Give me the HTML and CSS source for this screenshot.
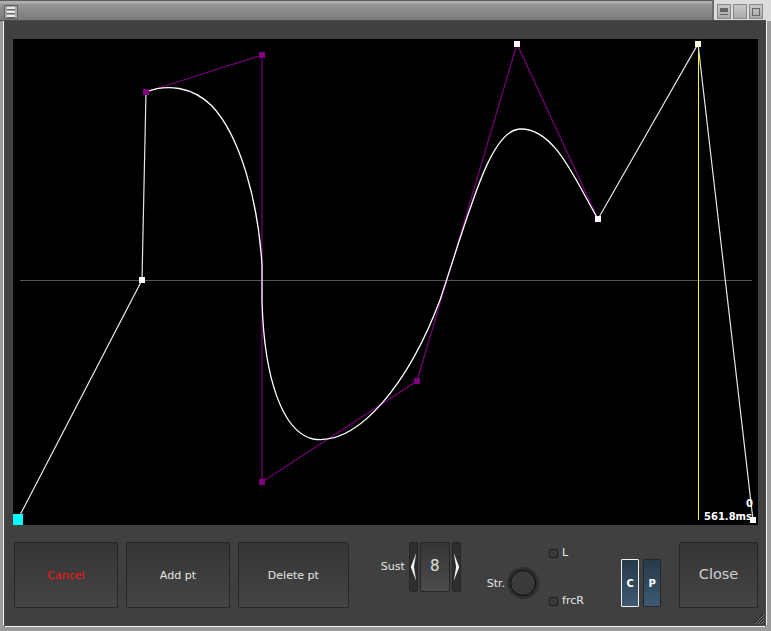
FILE: index.html
```html
<!DOCTYPE html>
<html>

<head>
    <title>Envelope Editor</title>
    <link rel="stylesheet" href="styles.css">
</head>

<body>
    <div class="window">
        <div class="titlebar">
            <span class="menu-btn"><i></i><i></i><i></i></span>
            <div class="title-btns">
                <span class="tbtn"><i class="shade"></i></span>
                <span class="tbtn"><i class="max"></i></span>
                <span class="tbtn"><i class="restore"></i></span>
            </div>
        </div>

        <div class="frame">
            <div class="panel">
                <div class="canvas">
                    <svg width="745" height="486" viewBox="13 39 745 486">
                        <line x1="20" y1="280.5" x2="752" y2="280.5" stroke="#555" stroke-width="1" />
                        <line x1="698.5" y1="44" x2="698.5" y2="520" stroke="#ffff00" stroke-width="1" />

                        <!-- control polygon -->
                        <polyline points="146,92 262,55 262,482 417,381 517,44 598,219" fill="none" stroke="#7a007a" stroke-width="1.2" />

                        <!-- straight segments -->
                        <polyline points="18,519 142,280 146,92" fill="none" stroke="#e6e6e6" stroke-width="1.2" />
                        <polyline points="598,219 698,44 753,520" fill="none" stroke="#e6e6e6" stroke-width="1.2" />

                        <!-- curve -->
                        <path d="M146,92 C166,84 192,86 212,106 C240,136 258,200 262,265 L262,300 C264,380 283,432 313,439 C360,446 410,380 440,300 C470,210 490,130 520,129 C555,128 575,180 598,219" fill="none" stroke="#ffffff" stroke-width="1.3" />

                        <rect x="13" y="514" width="10" height="11" fill="#00ffff" />
                        <rect x="139" y="277" width="6" height="6" fill="#fff" />
                        <rect x="143" y="89" width="6" height="6" fill="#800080" />
                        <rect x="259" y="52" width="6" height="6" fill="#800080" />
                        <rect x="259" y="479" width="6" height="6" fill="#800080" />
                        <rect x="414" y="378" width="6" height="6" fill="#800080" />
                        <rect x="514" y="41" width="6" height="6" fill="#fff" />
                        <rect x="595" y="216" width="6" height="6" fill="#fff" />
                        <rect x="695" y="41" width="6" height="6" fill="#ffffe6" />
                        <rect x="750" y="517" width="6" height="6" fill="#fff" />

                        <text x="753" y="507" class="info" text-anchor="end">0</text>
                        <text x="752" y="520" class="info" text-anchor="end">561.8ms</text>
                    </svg>
                </div>

                <div class="controls">
                    <button class="btn cancel">Cancel</button>
                    <button class="btn">Add pt</button>
                    <button class="btn wide">Delete pt</button>

                    <div class="sust">
                        <span class="lbl">Sust</span>
                        <div class="spinner">
                            <span class="arrow">
                                <svg width="9" height="48" viewBox="0 0 9 48"><polygon points="8,6 1,24 8,42 5,24" fill="#f2f2f2" /></svg>
                            </span>
                            <span class="val">8</span>
                            <span class="arrow">
                                <svg width="9" height="48" viewBox="0 0 9 48"><polygon points="1,6 8,24 1,42 4,24" fill="#f2f2f2" /></svg>
                            </span>
                        </div>
                    </div>

                    <div class="str">
                        <span class="lbl">Str.</span>
                        <span class="knob"></span>
                    </div>

                    <div class="checks">
                        <label class="chk"><span class="box"></span>L</label>
                        <label class="chk"><span class="box"></span>frcR</label>
                    </div>

                    <div class="toggles">
                        <span class="tog on">C</span>
                        <span class="tog">P</span>
                    </div>

                    <button class="btn close">Close</button>
                </div>

                <span class="grip">
                    <svg width="11" height="11" viewBox="0 0 11 11">
                        <line x1="10" y1="1" x2="1" y2="10" stroke="#222" />
                        <line x1="10" y1="4" x2="4" y2="10" stroke="#222" />
                        <line x1="10" y1="7" x2="7" y2="10" stroke="#222" />
                        <line x1="11" y1="2" x2="2" y2="11" stroke="#777" />
                        <line x1="11" y1="5" x2="5" y2="11" stroke="#777" />
                        <line x1="11" y1="8" x2="8" y2="11" stroke="#777" />
                    </svg>
                </span>
            </div>
        </div>
    </div>
</body>

</html>
```

FILE: styles.css
```css
body {
    margin: 0;
    background: #2b2b2b;
    font-family: "DejaVu Sans", sans-serif;
}

.window {
    width: 771px;
    height: 631px;
    background: #8a8a8a;
    overflow: hidden;
}

.titlebar {
    height: 21px;
    box-sizing: border-box;
    display: flex;
    align-items: flex-start;
    border-top: 1px solid #5a5a5a;
    border-bottom: 1px solid #4a4a4a;
    background: linear-gradient(#b0b0b0 0, #b0b0b0 2px, #969696 3px, #7a7a7a 100%);
}

.menu-btn {
    margin: 4px 0 0 4px;
    width: 14px;
    height: 14px;
    box-sizing: border-box;
    border: 1px solid #5e5e5e;
    background: #a8a8a8;
    display: flex;
    flex-direction: column;
    justify-content: center;
    gap: 1px;
    padding: 0 2px;
}

.menu-btn i {
    display: block;
    height: 2px;
    background: #e8e8e8;
    border-bottom: 1px solid #666;
}

.title-btns {
    margin-left: auto;
    margin-top: -1px;
    width: 59px;
    height: 21px;
    box-sizing: border-box;
    background: #dcdcdc;
    border-left: 2px solid #6a6a6a;
    display: flex;
    gap: 2px;
    padding: 4px 0 0 3px;
}

.tbtn {
    width: 14px;
    height: 15px;
    box-sizing: border-box;
    border: 1px solid #888;
    background: linear-gradient(#c8c8c8, #aaa);
    display: flex;
    align-items: center;
    justify-content: center;
}

.tbtn .shade {
    width: 8px;
    height: 7px;
    border-top: 4px solid #666;
    border-bottom: 1px solid #666;
    box-sizing: border-box;
}

.tbtn .restore {
    width: 6px;
    height: 6px;
    border: 1px solid #666;
}

.frame {
    height: 610px;
    padding: 0 6px 6px 5px;
    box-sizing: border-box;
    background: #9a9a9a;
}

.panel {
    position: relative;
    height: 604px;
    box-sizing: border-box;
    padding: 18px 7px 0 8px;
    background: #404040;
    box-shadow: 0 0 0 1px #4a4a4a, -2px 0 0 0 #f0f0f0, 0 2px 0 0 #f0f0f0, 2px 0 0 0 #f0f0f0;
}

.canvas {
    width: 745px;
    height: 486px;
    background: #000;
}

.canvas svg {
    display: block;
}

.info {
    font-family: "DejaVu Sans", sans-serif;
    font-weight: bold;
    font-size: 10px;
    fill: #fff;
}

.controls {
    display: flex;
    align-items: flex-start;
    margin-top: 17px;
    padding-left: 1px;
}

.btn {
    width: 104px;
    height: 66px;
    margin: 0 8px 0 0;
    padding: 0;
    border: 1px solid #262626;
    border-radius: 2px;
    background: linear-gradient(#353535, #454545);
    color: #e6e6e6;
    font-family: "DejaVu Sans", sans-serif;
    font-size: 11px;
}

.btn.cancel {
    color: #ff1010;
}

.btn.wide {
    width: 111px;
    margin-right: 0;
}

.btn.close {
    width: 79px;
    margin: 0 0 0 18px;
    font-size: 14.5px;
    color: #d0d0d0;
    padding-bottom: 2px;
}

.lbl {
    font-size: 11px;
    color: #e6e6e6;
}

.sust {
    display: flex;
    align-items: center;
    height: 50px;
    margin-left: 32px;
    gap: 4px;
}

.sust .lbl {
    margin-top: -2px;
}

.spinner {
    display: flex;
    gap: 2px;
    height: 50px;
}

.arrow {
    width: 9px;
    box-sizing: border-box;
    border: 1px solid #262626;
    border-radius: 2px;
    background: #2e2e2e;
    display: flex;
    align-items: center;
    justify-content: center;
    overflow: hidden;
}

.val {
    width: 30px;
    box-sizing: border-box;
    border: 1px solid #262626;
    border-radius: 2px;
    background: linear-gradient(#363636, #4c4c4c);
    color: #e0e0e0;
    font-size: 15px;
    text-align: center;
    padding-top: 14px;
}

.str {
    display: flex;
    align-items: center;
    gap: 5px;
    margin: 28px 0 0 26px;
}

.knob {
    width: 26px;
    height: 26px;
    box-sizing: border-box;
    border-radius: 50%;
    border: 1.5px solid #0c0c0c;
    background: #3a3a3a;
    box-shadow: 0 0 0 3px rgba(20, 20, 20, 0.4);
}

.checks {
    width: 72px;
    height: 58px;
    margin: 6px 0 0 13px;
    display: flex;
    flex-direction: column;
    justify-content: space-between;
}

.chk {
    display: flex;
    align-items: center;
    gap: 4px;
    font-size: 11px;
    line-height: 10px;
    color: #e6e6e6;
}

.chk .box {
    width: 9px;
    height: 9px;
    box-sizing: border-box;
    border: 1px solid #1e1e1e;
    border-radius: 2px;
    background: #3a3a3a;
}

.toggles {
    display: flex;
    gap: 4px;
    margin-top: 17px;
}

.tog {
    width: 18px;
    height: 48px;
    box-sizing: border-box;
    border: 1px solid #1e2830;
    border-radius: 1px;
    background: linear-gradient(#263a4a, #3e5a70);
    color: #fff;
    font-size: 10px;
    font-weight: bold;
    display: flex;
    align-items: center;
    justify-content: center;
}

.tog.on {
    border-color: #f0f0f0;
}

.grip {
    position: absolute;
    right: 1px;
    bottom: 1px;
    line-height: 0;
}
```
